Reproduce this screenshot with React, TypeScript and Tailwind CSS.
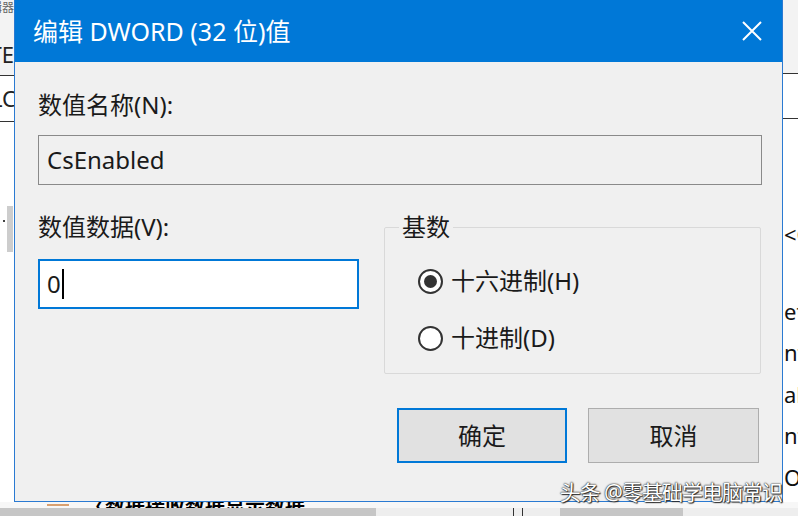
import React from "react";

function Radio({ checked }: { checked?: boolean }) {
  return (
    <div className="w-[25px] h-[25px] rounded-full border-2 border-[#333333] bg-white flex items-center justify-center shrink-0">
      {checked ? <div className="w-[13px] h-[13px] rounded-full bg-[#333333]" /> : null}
    </div>
  );
}

export default function App() {
  return (
    <div className="relative w-[798px] h-[516px] overflow-hidden flex flex-col bg-[#f7f7f7] text-[#1a1a1a] font-['Noto_Sans','Noto_Sans_CJK_SC',sans-serif]">
      <div className="flex h-[502px]">
        {/* left background strip */}
        <div className="w-[14px] flex flex-col overflow-hidden bg-[#f3f3f3]">
          <div className="h-[16px] overflow-hidden whitespace-nowrap text-[12px] leading-[16px] text-[#666]">
            <div className="w-[40px] -ml-[26px] text-right">编辑器</div>
          </div>
          <div className="h-[22px]" />
          <div className="h-[32px] overflow-hidden whitespace-nowrap text-[22px] leading-[32px] text-[#222]">
            <div className="w-[40px] -ml-[26px] text-right">TE</div>
          </div>
          <div className="h-[5px]" />
          <div className="h-[1px] bg-[#333]" />
          <div className="h-[45px] flex items-center overflow-hidden whitespace-nowrap text-[22px] text-[#222] bg-white">
            <div className="w-[40px] -ml-[24px] shrink-0 text-right">LC</div>
          </div>
          <div className="h-[1px] bg-[#333]" />
          <div className="flex-1 bg-white flex flex-col">
            <div className="h-[84px]" />
            <div className="flex items-start">
              <div className="w-[7px] pt-[14px] flex justify-center">
                <div className="w-[2px] h-[2px] bg-[#444]" />
              </div>
              <div className="w-[6px] h-[46px] bg-[#cdcdcd]" />
            </div>
          </div>
        </div>

        {/* dialog */}
        <div className="w-[769px] flex flex-col border-l border-r border-b border-[#2a7ad2] bg-[#f0f0f0]">
          <div className="h-[62px] bg-[#0078d7] flex items-center justify-between pl-[18px] pr-[20px] text-white">
            <div className="text-[25px] leading-[32px] whitespace-nowrap">编辑 DWORD (32 位)值</div>
            <svg width="20" height="20" viewBox="0 0 20 20" className="shrink-0">
              <path d="M1 1 L19 19 M19 1 L1 19" stroke="white" strokeWidth="2" fill="none" />
            </svg>
          </div>
          <div className="flex flex-col pl-[23px] pr-[20px] pt-[27px]">
            <div className="text-[24px] leading-[32px] whitespace-nowrap">数值名称(N):</div>
            <div className="mt-[14px] h-[50px] border border-[#8a8a8a] flex items-center pl-[8px] text-[24px] leading-[32px]">CsEnabled</div>
            <div className="flex mt-[26px]">
              <div className="w-[321px] flex flex-col">
                <div className="h-[32px] text-[24px] leading-[32px] whitespace-nowrap">数值数据(V):</div>
                <div className="mt-[16px] h-[50px] border-2 border-[#0078d7] bg-white flex items-center pl-[7px] text-[24px] leading-[32px]">
                  <span>0</span>
                  <div className="w-[2px] h-[30px] bg-black ml-[1px]" />
                </div>
              </div>
              <fieldset className="ml-[25px] w-[377px] border border-[#d9d9d9] rounded-[2px] pb-[19px]">
                <legend className="ml-[14px] px-[3px] text-[24px] leading-[32px]">基数</legend>
                <div className="flex flex-col pt-[22px] gap-[25px]">
                  <div className="flex items-center pl-[33px] gap-[8px] h-[32px]">
                    <Radio checked />
                    <span className="text-[24px] leading-[32px] whitespace-nowrap">十六进制(H)</span>
                  </div>
                  <div className="flex items-center pl-[33px] gap-[8px] h-[32px]">
                    <Radio />
                    <span className="text-[24px] leading-[32px] whitespace-nowrap">十进制(D)</span>
                  </div>
                </div>
              </fieldset>
            </div>
            <div className="flex justify-end mt-[34px] gap-[21px] pr-[3px]">
              <div className="w-[170px] h-[55px] border-2 border-[#0078d7] bg-[#e1e1e1] flex items-center justify-center text-[24px] leading-[32px]">确定</div>
              <div className="w-[171px] h-[55px] border border-[#adadad] bg-[#e1e1e1] flex items-center justify-center text-[24px] leading-[32px]">取消</div>
            </div>
          </div>
        </div>

        {/* right background strip */}
        <div className="w-[15px] flex flex-col overflow-hidden bg-white text-[22px] leading-[32px] text-[#111] whitespace-nowrap">
          <div className="h-[76px] bg-[#f3f3f3]" />
          <div className="h-[1px] bg-[#333]" />
          <div className="h-[45px]" />
          <div className="h-[1px] bg-[#333]" />
          <div className="h-[103px]" />
          <div className="h-[32px] pl-[1px]">&lt;C</div>
          <div className="h-[46px]" />
          <div className="h-[43px] pl-[1px]">et</div>
          <div className="h-[43px] pl-[1px]">nt</div>
          <div className="h-[43px] pl-[1px]">ab</div>
          <div className="h-[43px] pl-[1px]">nt</div>
          <div className="h-[43px] pl-[1px]">O</div>
        </div>
      </div>

      {/* bottom background strip */}
      <div className="h-[14px] flex flex-col">
        <div className="h-[6px] flex overflow-hidden bg-[#f7f7f7]">
          <div className="w-[47px]" />
          <div className="w-[22px] h-[2px] mt-[2px] bg-[#d9a070]" />
          <div className="w-[16px]" />
          <div className="text-[20px] leading-[10px] font-bold text-black whitespace-nowrap">〈数据接收数据显示数据</div>
        </div>
        <div className="h-[8px] flex">
          <div className="w-[376px] bg-[#c6c6c6]" />
          <div className="w-[137px] bg-[#eeeeee]" />
          <div className="w-[1px] bg-[#333]" />
          <div className="w-[8px] bg-[#eeeeee]" />
          <div className="w-[1px] bg-[#333]" />
          <div className="w-[37px] bg-[#eeeeee]" />
          <div className="w-[123px] bg-[#c6c6c6]" />
          <div className="flex-1 bg-[#eeeeee]" />
        </div>
      </div>

      {/* watermark */}
      <div className="absolute right-[16px] top-[478px] text-[21px] leading-[28px] tracking-[-1px] text-white whitespace-nowrap [text-shadow:0_0_1px_#222,0_0_2px_#222,1px_1px_1px_#333]">
        头条 @零基础学电脑常识
      </div>
    </div>
  );
}
